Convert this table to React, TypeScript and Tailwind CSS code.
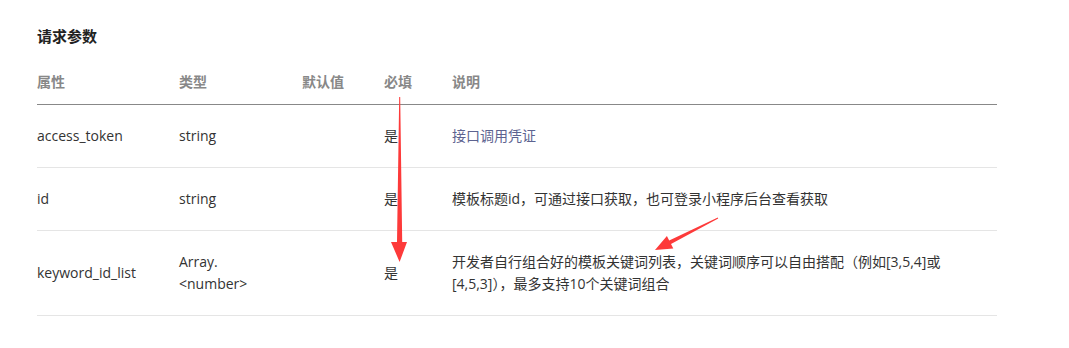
import React from "react"

const font = { fontFamily: '"Open Sans", "Noto Sans CJK SC", sans-serif' }

type Row = {
  name: string
  type: React.ReactNode
  def: string
  required: string
  desc: React.ReactNode
  descClass?: string
}

const rows: Row[] = [
  {
    name: "access_token",
    type: "string",
    def: "",
    required: "是",
    desc: "接口调用凭证",
    descClass: "text-[#5d6390]",
  },
  {
    name: "id",
    type: "string",
    def: "",
    required: "是",
    desc: "模板标题id，可通过接口获取，也可登录小程序后台查看获取",
  },
  {
    name: "keyword_id_list",
    type: (
      <>
        Array.
        <br />
        {"<number>"}
      </>
    ),
    def: "",
    required: "是",
    desc: (
      <>
        开发者自行组合好的模板关键词列表，关键词顺序可以自由搭配（例如[3,5,4]或
        <br />
        [4,5,3]），最多支持10个关键词组合
      </>
    ),
  },
]

const cols = "grid grid-cols-[142px_123px_82px_68px_1fr]"

export default function App() {
  return (
    <div className="relative w-[1069px] h-[348px] bg-white overflow-hidden" style={font}>
      <div className="pt-[26px] pl-[37px] w-[997px]">
        <h2 className="text-[15px] leading-[20px] font-bold text-[#222]">请求参数</h2>

        <div className="mt-[25px]">
          <div className={`${cols} pb-[11px] border-b border-[#888] text-[14px] leading-[22px] font-bold text-[#888]`}>
            <div>属性</div>
            <div>类型</div>
            <div>默认值</div>
            <div>必填</div>
            <div>说明</div>
          </div>

          {rows.map((r) => (
            <div
              key={r.name}
              className={`${cols} items-center py-5 border-b border-[#e5e5e5] text-[14px] leading-[22px] text-[#333]`}
            >
              <div>{r.name}</div>
              <div>{r.type}</div>
              <div>{r.def}</div>
              <div>{r.required}</div>
              <div className={r.descClass}>{r.desc}</div>
            </div>
          ))}
        </div>
      </div>

      {/* annotation arrows */}
      <svg
        className="absolute inset-0 pointer-events-none"
        width="1069"
        height="348"
        viewBox="0 0 1069 348"
      >
        <polygon
          points="399.2,97 400.2,97 402.2,242 407,242 399.6,262 391,242 397,242"
          fill="#fd3a3a"
        />
        <polygon
          points="717.8,217.6 718.2,218.4 671,244.1 673.3,248.5 655,250 666.9,236.1 669.2,240.5"
          fill="#fd3a3a"
        />
      </svg>
    </div>
  )
}
